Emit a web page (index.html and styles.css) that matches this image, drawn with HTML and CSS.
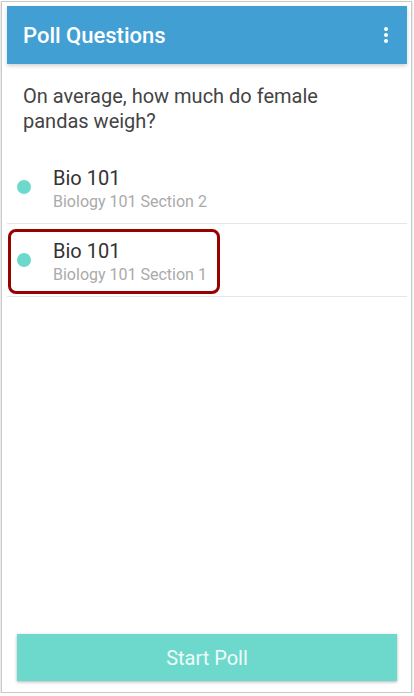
FILE: index.html
```html
<!DOCTYPE html>
<html lang="en">

<head>
    <meta charset="UTF-8">
    <meta name="viewport" content="width=device-width, initial-scale=1.0">
    <title>Poll Questions</title>
    <link rel="stylesheet" href="styles.css">
</head>

<body>

    <div class="frame">
        <div class="screen">
            <div class="header">
                <h1>Poll Questions</h1>
                <div class="menu">
                    <span></span>
                    <span></span>
                    <span></span>
                </div>
            </div>

            <p class="question">On average, how much do female pandas weigh?</p>

            <ul class="list">
                <li>
                    <i class="dot"></i>
                    <div>
                        <p class="name">Bio 101</p>
                        <p class="section">Biology 101 Section 2</p>
                    </div>
                </li>
                <li>
                    <i class="dot"></i>
                    <div>
                        <p class="name">Bio 101</p>
                        <p class="section">Biology 101 Section 1</p>
                    </div>
                    <!-- 標示框 -->
                    <span class="mark"></span>
                </li>
            </ul>

            <div class="footer">
                <button class="start">Start Poll</button>
            </div>
        </div>
    </div>

</body>

</html>
```

FILE: styles.css
```css
* {
    margin: 0;
    padding: 0;
    box-sizing: border-box;
}

body {
    background-color: #fff;
    font-family: Roboto, "Liberation Sans", sans-serif;
}

.frame {
    width: 411px;
    height: 692px;
    margin: 1px 0 0 1px;
    padding: 4px 4px 2px 5px;
    border: 1px solid #c9c9c9;
    box-shadow: 0 1px 2px rgba(0, 0, 0, 0.25);
}

.screen {
    height: 100%;
    display: flex;
    flex-direction: column;
    background-color: #fff;
}

.header {
    height: 58px;
    background-color: #419fd4;
    display: flex;
    justify-content: space-between;
    align-items: center;
    padding: 0 19px 0 16px;
    box-shadow: 0 2px 4px rgba(0, 0, 0, 0.18);
    position: relative;
}

.header h1 {
    color: #fff;
    font-size: 22px;
    font-weight: 500;
}

.menu {
    display: flex;
    flex-direction: column;
    gap: 2px;
}

.menu span {
    width: 4px;
    height: 4px;
    border-radius: 50%;
    background-color: #fff;
}

.question {
    padding: 20px 60px 0 16px;
    font-size: 20px;
    line-height: 25px;
    color: #444;
}

.list {
    list-style: none;
    margin-top: 17px;
}

.list li {
    display: flex;
    align-items: center;
    height: 73px;
    padding: 5px 0 0 10px;
    border-bottom: 1px solid #e6e6e6;
    position: relative;
}

.dot {
    width: 14px;
    height: 14px;
    border-radius: 50%;
    background-color: #6dd8cc;
    margin: 0 22px 5px 0;
}

.name {
    font-size: 20px;
    color: #333;
    line-height: 25px;
}

.section {
    font-size: 16px;
    color: #aaa;
    line-height: 22px;
}

.mark {
    position: absolute;
    left: 1px;
    top: 5px;
    width: 212px;
    height: 65px;
    border: 3px solid #990000;
    border-radius: 8px;
}

.footer {
    margin-top: auto;
    padding: 0 10px 9px 10px;
}

.start {
    width: 100%;
    height: 47px;
    border: 0;
    background-color: #6dd8cc;
    color: #f0fbf9;
    font-family: inherit;
    font-size: 20px;
    box-shadow: 0 1px 3px rgba(0, 0, 0, 0.3);
}
```
